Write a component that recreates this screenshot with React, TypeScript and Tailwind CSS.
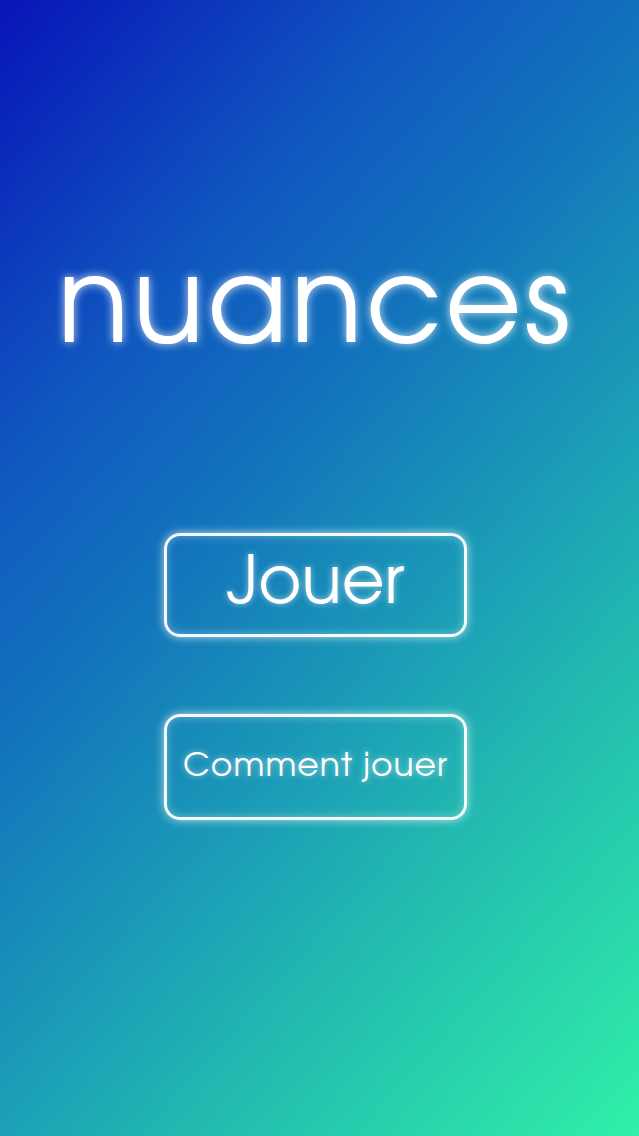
import React from 'react';

const font = { fontFamily: '"URW Gothic", "TeX Gyre Adventor", Lato, "Noto Sans", sans-serif' };

function MenuButton({ label, size }: { label: string; size: 'lg' | 'sm' }) {
  return (
    <button
      type="button"
      className="flex w-[303px] items-center justify-center rounded-[16px] border-[3px] border-white/95 text-white shadow-[0_0_10px_rgba(255,255,255,0.7),inset_0_0_10px_rgba(255,255,255,0.35)]"
      style={font}
    >
      <span
        className={
          size === 'lg'
            ? 'flex h-[98px] items-center whitespace-nowrap text-[66px] font-light leading-none [text-shadow:0_0_6px_rgba(255,255,255,0.6)]'
            : 'flex h-[100px] items-center whitespace-nowrap text-[33px] font-light leading-none tracking-[1px] [text-shadow:0_0_6px_rgba(255,255,255,0.6)]'
        }
      >
        {label}
      </span>
    </button>
  );
}

export default function App() {
  return (
    <div className="flex h-[1136px] w-full flex-col items-center bg-[linear-gradient(132deg,#0814b8_0%,#1058c0_26%,#1272bc_40%,#1ca2b6_62%,#22b8b0_72%,#30f0a8_100%)]">
      <h1
        className="mt-[251px] mr-[8px] whitespace-nowrap text-[118px] font-normal leading-none tracking-[3px] text-white [text-shadow:0_0_10px_rgba(255,255,255,0.8)]"
        style={font}
      >
        nuances
      </h1>
      <div className="mt-[164px] mr-[8px] flex flex-col gap-[77px]">
        <MenuButton label="Jouer" size="lg" />
        <MenuButton label="Comment jouer" size="sm" />
      </div>
    </div>
  );
}
